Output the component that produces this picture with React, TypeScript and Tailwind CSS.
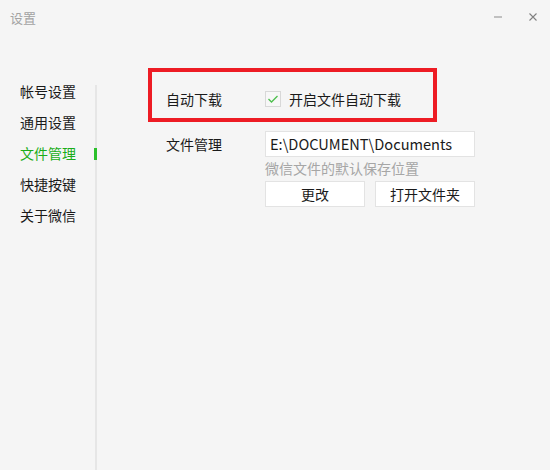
import React from "react";

const font = { fontFamily: '"Noto Sans CJK SC", "Noto Sans", sans-serif' };

export default function App() {
  const items = ["帐号设置", "通用设置", "文件管理", "快捷按键", "关于微信"];
  return (
    <div
      className="w-[550px] h-[470px] bg-[#f5f5f5] flex flex-col text-[14px] text-[#1a1a1a] overflow-hidden"
      style={font}
    >
      {/* title bar */}
      <div className="h-[34px] flex items-center pl-[10px] shrink-0">
        <span className="text-[13px] text-[#a3a3a3] leading-none">设置</span>
        <div className="ml-auto flex items-center">
          <div className="w-[8px] h-[2px] bg-[#c0c0c0] mr-[27px]" />
          <svg width="8" height="8" viewBox="0 0 8 8" className="mr-[13px]">
            <path d="M0.5 0.5 L7.5 7.5 M7.5 0.5 L0.5 7.5" stroke="#808080" strokeWidth="1.1" />
          </svg>
        </div>
      </div>

      <div className="flex flex-1">
        {/* sidebar */}
        <div className="flex">
          <div className="w-[95px] pt-[42px] flex flex-col">
            {items.map((t) => (
              <div
                key={t}
                className={
                  "relative h-[31px] flex items-center pl-[20px] " +
                  (t === "文件管理" ? "text-[#1aad19]" : "text-[#1a1a1a]")
                }
              >
                {t}
                {t === "文件管理" && (
                  <div className="absolute right-[-2px] top-[10px] w-[3px] h-[12px] bg-[#2bc02b]" />
                )}
              </div>
            ))}
          </div>
          <div className="w-[2px] mt-[51px] bg-[#e6e6e6]" />
        </div>

        {/* main */}
        <div className="flex flex-col pt-[34px] pl-[51px]">
          <div className="w-[289px] h-[54px] border-4 border-[#ed1c24] pl-[14px] pt-[17px]">
            <div className="flex items-center h-[20px]">
              <span className="w-[99px]">自动下载</span>
              <div className="w-[16px] h-[16px] border border-[#d8d8d8] bg-[#f7f7f7] flex items-center justify-center">
                <svg width="12" height="10" viewBox="0 0 12 10">
                  <path d="M1.5 5 L4.5 8 L10.5 2" fill="none" stroke="#4cbf4c" strokeWidth="1.3" />
                </svg>
              </div>
              <span className="ml-[8px]">开启文件自动下载</span>
            </div>
          </div>

          <div className="flex mt-[9px] pl-[18px]">
            <span className="w-[99px] h-[26px] flex items-center">文件管理</span>
            <div className="flex flex-col">
              <div className="w-[210px] h-[26px] bg-white border border-[#e3e3e3] flex items-center pl-[4px] text-[14.6px]">
                E:\DOCUMENT\Documents
              </div>
              <div className="h-[22px] flex items-center text-[#a6a6a6] text-[14px]">微信文件的默认保存位置</div>
              <div className="flex gap-[10px] mt-[2px]">
                <button className="w-[100px] h-[26px] bg-white border border-[#e3e3e3] flex items-center justify-center">
                  更改
                </button>
                <button className="w-[100px] h-[26px] bg-white border border-[#e3e3e3] flex items-center justify-center">
                  打开文件夹
                </button>
              </div>
            </div>
          </div>
        </div>
      </div>
    </div>
  );
}
